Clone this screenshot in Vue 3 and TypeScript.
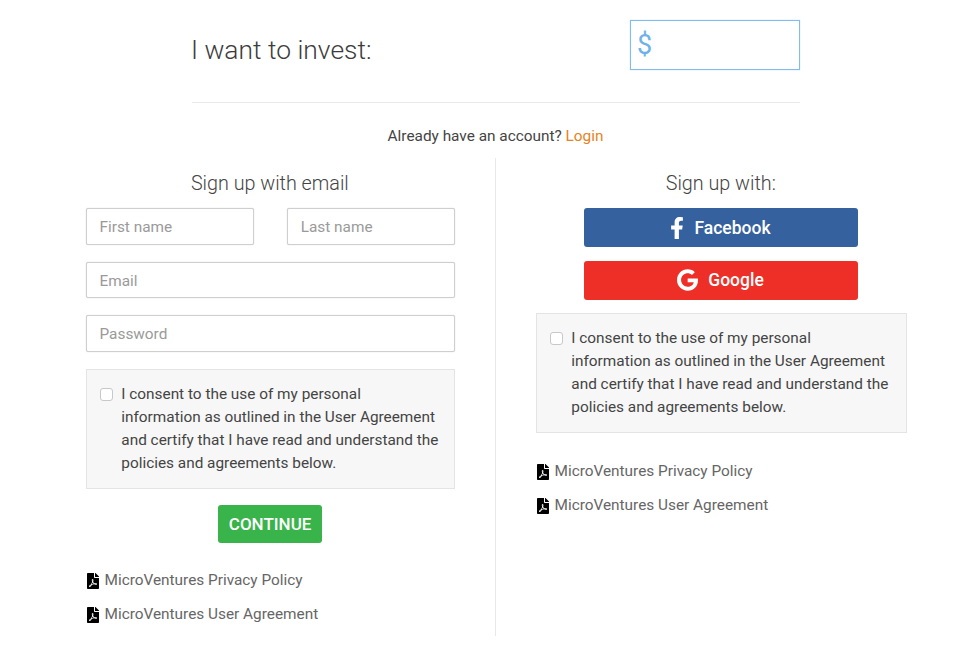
<script setup lang="ts">
const consent =
  'I consent to the use of my personal information as outlined in the User Agreement and certify that I have read and understand the policies and agreements below.'
const docs = ['MicroVentures Privacy Policy', 'MicroVentures User Agreement']
const pdf =
  'M181.9 256.1c-5-16-4.9-46.9-2-46.9 8.4 0 7.6 36.9 2 46.9zm-1.7 47.2c-7.7 20.2-17.3 43.3-28.4 62.7 18.3-7 39-17.2 62.9-21.9-12.7-9.6-24.9-23.4-34.5-40.8zM86.1 428.1c0 .8 13.2-5.4 34.9-40.2-6.7 6.3-29.1 24.5-34.9 40.2zM248 160h136v328c0 13.3-10.7 24-24 24H24c-13.3 0-24-10.7-24-24V24C0 10.7 10.7 0 24 0h200v136c0 13.2 10.8 24 24 24zm-8 171.8c-20-12.2-33.3-29-42.7-53.8 4.5-18.5 11.6-46.6 6.2-64.2-4.7-29.4-42.4-26.5-47.8-6.8-5 18.3-.4 44.1 8.1 77-11.6 27.6-28.7 64.6-40.8 85.8-.1 0-.1.1-.2.1-27.1 13.9-73.6 44.5-54.5 68 5.6 6.9 16 10 21.5 10 17.9 0 35.7-18 61.1-61.8 25.8-8.5 54.1-19.1 79-23.2 21.7 11.8 47.1 19.5 64 19.5 29.2 0 31.2-32 19.7-43.4-13.9-13.6-54.3-9.7-73.6-7.2zM377 105L279 7c-4.5-4.5-10.6-7-17-7h-6v128h128v-6.1c0-6.3-2.5-12.4-7-16.9zm-74.1 255.3c4.1-2.7-2.5-11.9-42.8-9 37.1 15.8 42.8 9 42.8 9z'
</script>

<template>
  <div class="page">
    <header class="invest">
      <h1 class="invest-title">I want to invest:</h1>
      <div class="amount"><span class="dollar">$</span></div>
    </header>
    <p class="already">Already have an account? <a class="login" href="#">Login</a></p>
    <main class="columns">
      <section class="col col-left">
        <h2 class="col-title">Sign up with email</h2>
        <div class="name-row">
          <input class="field" placeholder="First name" />
          <input class="field" placeholder="Last name" />
        </div>
        <input class="field field-wide" placeholder="Email" />
        <input class="field field-wide" placeholder="Password" />
        <label class="consent">
          <input type="checkbox" class="check" />
          <span>{{ consent }}</span>
        </label>
        <div class="continue-wrap"><button class="continue">CONTINUE</button></div>
        <ul class="docs">
          <li v-for="d in docs" :key="d" class="doc">
            <svg class="pdf" viewBox="0 0 384 512"><path :d="pdf" /></svg>
            <a href="#">{{ d }}</a>
          </li>
        </ul>
      </section>
      <section class="col col-right">
        <h2 class="col-title">Sign up with:</h2>
        <button class="social fb">
          <svg class="fb-icon" viewBox="0 0 320 512"><path d="M279.14 288l14.22-92.66h-88.91v-60.13c0-25.35 12.42-50.06 52.24-50.06h40.42V6.26S260.43 0 225.36 0c-73.22 0-121.08 44.38-121.08 124.72v70.62H22.89V288h81.39v224h100.17V288z" /></svg>
          Facebook
        </button>
        <button class="social gg">
          <svg class="gg-icon" viewBox="0 0 488 512"><path d="M488 261.8C488 403.3 391.1 504 248 504 110.8 504 0 393.2 0 256S110.8 8 248 8c66.8 0 123 24.5 166.3 64.9l-67.5 64.9C258.5 52.6 94.3 116.6 94.3 256c0 86.5 69.1 156.6 153.7 156.6 98.2 0 135-70.4 140.8-106.9H248v-85.3h236.1c2.3 12.7 3.9 24.9 3.9 41.4z" /></svg>
          Google
        </button>
        <label class="consent">
          <input type="checkbox" class="check" />
          <span>{{ consent }}</span>
        </label>
        <ul class="docs docs-right">
          <li v-for="d in docs" :key="d" class="doc">
            <svg class="pdf" viewBox="0 0 384 512"><path :d="pdf" /></svg>
            <a href="#">{{ d }}</a>
          </li>
        </ul>
      </section>
    </main>
  </div>
</template>

<style>
html, body { background: #fff; }
</style>

<style scoped>
.page {
  width: 974px;
  height: 647px;
  overflow: hidden;
  font-family: Roboto, "Liberation Sans", sans-serif;
  color: #444;
  font-size: 15.36px;
}
.invest {
  box-sizing: border-box;
  width: 608px;
  height: 103px;
  margin-left: 192px;
  padding-top: 20px;
  display: flex;
  justify-content: space-between;
  align-items: flex-start;
  border-bottom: 1px solid #eaeaea;
}
.invest-title {
  margin: 12px 0 0 -1px;
  font-size: 26.4px;
  line-height: 36px;
  font-weight: 300;
  color: #3c3c3c;
}
.amount {
  box-sizing: border-box;
  width: 170px;
  height: 50px;
  border: 1px solid #7fbcef;
  box-shadow: 0 0 1px #a8d2f3;
  padding-left: 6px;
  display: flex;
  align-items: center;
}
.dollar {
  font-size: 27px;
  line-height: 1;
  font-weight: 400;
  color: #6fb1ea;
}
.already {
  margin: 23px 0 0;
  text-align: center;
  width: 991px;
  line-height: 20px;
}
.login { color: #e58425; text-decoration: none; }
.columns {
  display: flex;
  margin-top: 12px;
  height: 478px;
}
.col { box-sizing: border-box; }
.col-left {
  width: 496px;
  padding: 0 39.8px 0 86px;
  border-right: 1px solid #e8e8e8;
}
.col-right {
  width: 478px;
  padding: 0 67px 0 40px;
}
.col-title {
  margin: 15px 1.5px 13px 0;
  text-align: center;
  font-size: 19.75px;
  line-height: 22px;
  font-weight: 300;
  color: #444;
}
.name-row {
  display: flex;
  justify-content: space-between;
  margin-bottom: 17px;
}
.field {
  box-sizing: border-box;
  width: 168px;
  height: 36.6px;
  border: 1px solid #cfcfcf;
  box-shadow: 0 0 1px #c4c4c4;
  border-radius: 2px;
  padding: 2px 12.5px 0;
  font: 400 15.36px Roboto, sans-serif;
  color: #444;
  background: #fff;
  outline: none;
}
.field::placeholder { color: #9a9a9a; opacity: 1; }
.field-wide {
  display: block;
  width: 100%;
  margin-bottom: 17px;
}
.consent {
  box-sizing: border-box;
  display: flex;
  gap: 8px;
  height: 120px;
  padding: 13px 14px 0 13px;
  background: #f7f7f7;
  border: 1px solid #e4e4e4;
  line-height: 23px;
  color: #444;
}
.check {
  appearance: none;
  flex: none;
  box-sizing: border-box;
  width: 13.3px;
  height: 13.3px;
  margin: 5px 0 0;
  background: #fff;
  border: 1px solid #c8c8c8;
  border-radius: 3px;
}
.continue-wrap {
  display: flex;
  justify-content: center;
  margin-top: 16.6px;
  padding-right: 1px;
}
.continue {
  width: 104px;
  height: 37.4px;
  border: 0;
  border-radius: 3px;
  background: #38b44a;
  color: #fff;
  font: 500 17px Roboto, sans-serif;
  padding: 0;
}
.docs {
  list-style: none;
  margin: 27.3px 0 0;
  padding: 0 0 0 1px;
  display: flex;
  flex-direction: column;
  gap: 14px;
}
.docs-right { margin-top: 27.6px; }
.doc {
  display: flex;
  align-items: center;
  gap: 5.5px;
  height: 20px;
}
.doc a { color: #666; text-decoration: none; }
.pdf { width: 12px; height: 16px; fill: #000; flex: none; position: relative; top: 1px; }
.social {
  display: flex;
  align-items: center;
  justify-content: center;
  gap: 10px;
  width: 274px;
  height: 39.3px;
  margin: 0 0 13.3px 48px;
  border: 0;
  border-radius: 3px;
  color: #fff;
  font: 500 17.5px Roboto, sans-serif;
  padding: 0 1px 0 0;
}
.fb { background: #35629f; }
.gg { background: #ee2f28; }
.fb-icon { width: 14px; height: 22px; fill: #fff; }
.gg-icon { width: 21px; height: 22px; fill: #fff; }
</style>
